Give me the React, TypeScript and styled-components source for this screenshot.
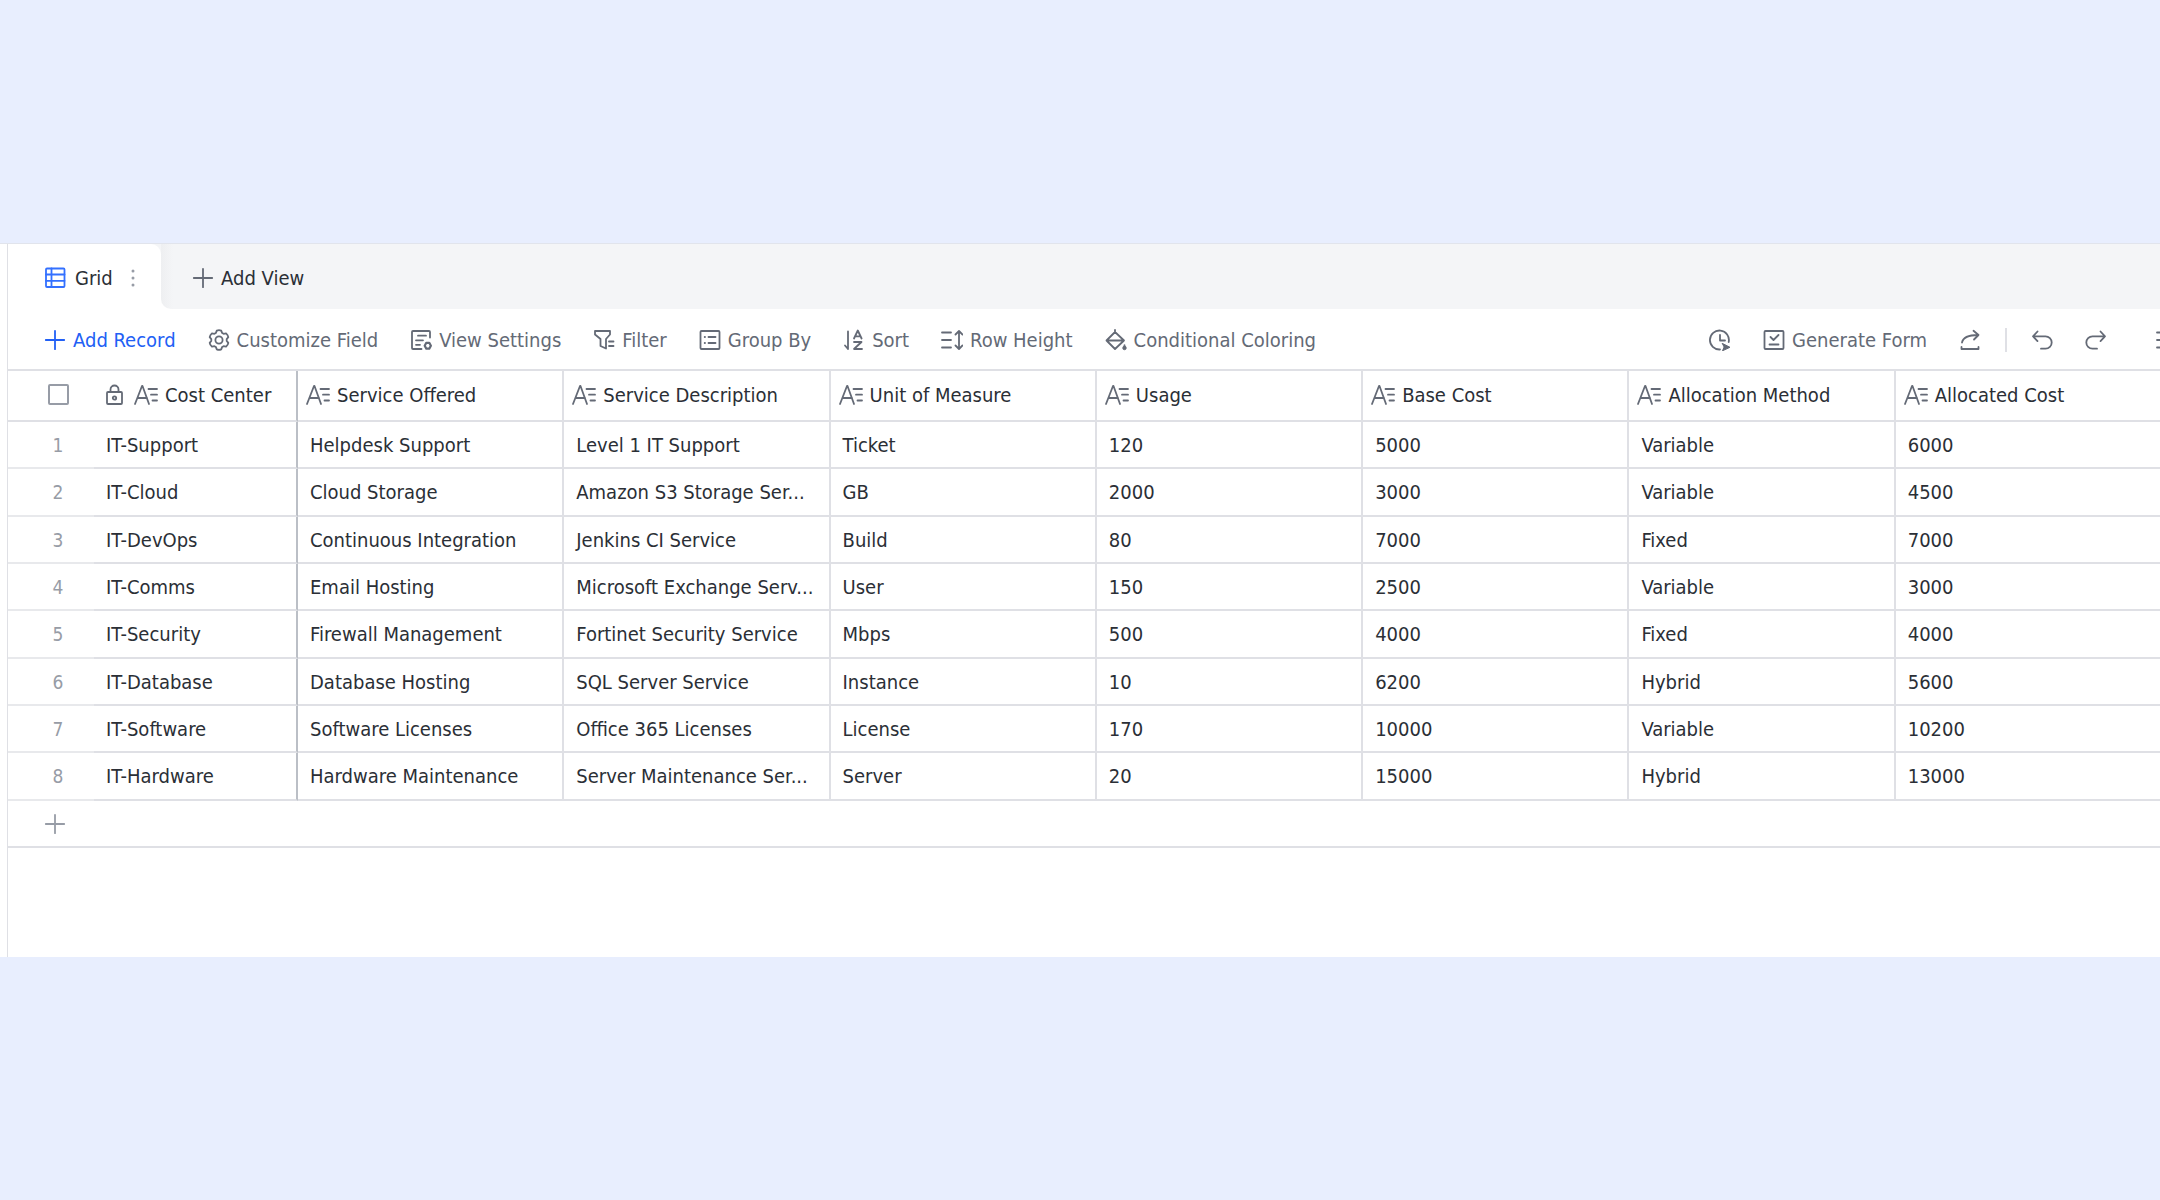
import React from "react";
import styled, { createGlobalStyle } from "styled-components";

const color = {
  backdrop: "#e8eefe",
  panel: "#ffffff",
  strip: "#f4f5f7",
  line: "#dfe0e5",
  frozen: "#bbbfc6",
  text: "#2b2f36",
  muted: "#646a76",
  faint: "#979ca6",
  accent: "#2260f5",
};

const GlobalStyle = createGlobalStyle`
  *, *::before, *::after { box-sizing: border-box; }
  body {
    margin: 0;
    overflow-x: hidden;
    background: ${color.backdrop};
    color: ${color.text};
    font: 20px/26px Tahoma, "DejaVu Sans Condensed", "Noto Sans", sans-serif;
  }
  button { font: inherit; color: inherit; background: none; border: 0; padding: 0; cursor: pointer; }
`;

const Page = styled.div`
  min-height: 100vh;
  display: flex;
  flex-direction: column;
  justify-content: center;
  overflow: hidden;
`;

const Panel = styled.main`
  background: ${color.panel};
  border-top: 1px solid #e1e4ec;
  padding-left: 7px;
`;

const Workspace = styled.section`
  border-left: 1px solid ${color.line};
  padding-bottom: 109px;
`;

const ViewBar = styled.nav`
  display: flex;
  height: 65px;
`;

const TabSlot = styled.div`
  flex: none;
  background: ${color.strip};
`;

const ActiveTab = styled.div`
  display: flex;
  align-items: center;
  height: 100%;
  width: 153px;
  padding: 2px 26px 0 36px;
  background: ${color.panel};
  border-top-right-radius: 10px;
`;

const TabButton = styled.button`
  display: flex;
  align-items: center;
  gap: 9px;
`;

const MoreButton = styled.button`
  display: flex;
  margin-left: auto;
`;

const ViewStrip = styled.div`
  flex: 1;
  display: flex;
  align-items: center;
  padding: 2px 0 0 31px;
  border-bottom-left-radius: 10px;
  background: linear-gradient(to right, #eeeff1, ${color.strip} 12px);
`;

const Toolbar = styled.div`
  display: flex;
  align-items: center;
  height: 60px;
  padding: 2px 0 0 36px;
`;

const ToolGroup = styled.div<{ $gap: number; $end?: boolean }>`
  display: flex;
  align-items: center;
  gap: ${(p) => p.$gap}px;
  flex: none;
  ${(p) => p.$end && "margin-left: auto; margin-right: -17px;"}
`;

const Tool = styled.button<{ $tone?: "accent" | "dark" }>`
  display: flex;
  align-items: center;
  gap: 7px;
  white-space: nowrap;
  color: ${(p) => (p.$tone === "accent" ? color.accent : p.$tone === "dark" ? color.text : color.muted)};
`;

const Divider = styled.span`
  width: 2px;
  height: 24px;
  background: ${color.line};
`;

const Glyph = styled.svg<{ $tone?: string }>`
  flex: none;
  display: block;
  fill: none;
  stroke: ${(p) => p.$tone ?? "currentColor"};
  stroke-width: 1.8;
  stroke-linecap: round;
  stroke-linejoin: round;
`;

const Table = styled.table`
  width: calc(100% + 2px);
  table-layout: fixed;
  border-collapse: separate;
  border-spacing: 0;
  border-top: 2px solid ${color.line};
`;

const IndexCol = styled.col`
  width: 86px;
`;

const NameCol = styled.col`
  width: 204px;
`;

const HeadCell = styled.th<{ $frozen?: boolean; $bare?: boolean }>`
  height: 51px;
  padding: 0 0 2px ${(p) => (p.$frozen ? 12 : 8)}px;
  font-weight: 400;
  text-align: left;
  white-space: nowrap;
  border-bottom: 2px solid ${color.line};
  border-right: ${(p) => (p.$bare ? "0" : `2px solid ${p.$frozen ? color.frozen : color.line}`)};
`;

const Field = styled.span`
  display: flex;
  align-items: center;
  gap: 7px;
`;

const LockSlot = styled.span`
  display: flex;
  margin-right: 4px;
`;

const Checkbox = styled.input`
  appearance: none;
  display: block;
  width: 21px;
  height: 21px;
  margin: 0 0 0 32px;
  border: 2px solid ${color.faint};
  border-radius: 2px;
`;

const Row = styled.tr`
  height: 47px;
  &:nth-child(3n + 2) { height: 48px; }
`;

const Cell = styled.td<{ $frozen?: boolean; $bare?: boolean }>`
  padding: 0 8px 0 12px;
  white-space: nowrap;
  overflow: hidden;
  text-overflow: ellipsis;
  border-bottom: 2px solid ${color.line};
  border-right: ${(p) => (p.$bare ? "0" : `2px solid ${p.$frozen ? color.frozen : color.line}`)};
`;

const IndexCell = styled.td`
  padding: 0 0 0 14px;
  text-align: center;
  font-size: 19px;
  color: ${color.faint};
  border-bottom: 2px solid #e8e9ec;
`;

const AddRow = styled.button`
  display: flex;
  align-items: center;
  width: 100%;
  height: 47px;
  padding-left: 36px;
  border-bottom: 2px solid ${color.line};
  color: ${color.faint};
`;

const Icon = ({ children, size = 22, tone }: { children: React.ReactNode; size?: number; tone?: string }) => (
  <Glyph width={size} height={size} viewBox="0 0 22 22" $tone={tone} aria-hidden="true">
    {children}
  </Glyph>
);

const PlusIcon = ({ tone }: { tone?: string }) => (
  <Icon tone={tone}><path d="M11 1.8v18.4M1.8 11h18.4" /></Icon>
);

const GridIcon = () => (
  <Icon tone="#3370ff">
    <rect x="2" y="1.500" width="18.500" height="18.500" rx="1" />
    <path d="M7.500 1.500V20M2 7.500h18.500M2 13.800h18.500" />
  </Icon>
);

const DotsIcon = () => (
  <Glyph width="4" height="18" viewBox="0 0 4 18" aria-hidden="true">
    <g fill={color.faint} stroke="none">
      <circle cx="2" cy="2" r="1.5" /><circle cx="2" cy="9" r="1.5" /><circle cx="2" cy="16" r="1.5" />
    </g>
  </Glyph>
);

const GearIcon = () => (
  <Icon>
    <path d="M8.800 1.600Q11 .6 13.200 1.600l.9 2.300 1.500.9 2.500-.4q1.800 1.400 2.200 3.800l-1.600 1.900v1.800l1.600 1.900q-.4 2.400-2.200 3.800l-2.500-.4-1.500.9-.9 2.300q-2.200 1-4.400 0l-.9-2.300-1.500-.9-2.500.4q-1.800-1.400-2.200-3.800l1.600-1.900v-1.800L1.700 8.200q.4-2.400 2.200-3.800l2.500.4 1.500-.9z" />
    <circle cx="11" cy="11" r="3.600" />
  </Icon>
);

const SettingsIcon = () => (
  <Icon>
    <path d="M20 8.500V3a1 1 0 0 0-1-1H3a1 1 0 0 0-1 1v16a1 1 0 0 0 1 1h8.500M8 6.700h8M6 11.300h7M6 15.800h4" />
    <path d="M16.300 13.800h3l1.600 2.900-1.600 2.900h-3l-1.600-2.900z" strokeWidth="2.200" />
  </Icon>
);

const FilterIcon = () => (
  <Icon>
    <path d="M2 2h15v3.500l-4 4.500v9.500l-5.500-2.500v-7L2 5.500zM16 12.500h4.500M16 17h4.500" />
  </Icon>
);

const GroupIcon = () => (
  <Icon>
    <rect x="1.500" y="2" width="19" height="18" rx="1" />
    <path d="M9.500 8h7M9.500 14h7M5.700 8h.3M5.700 14h.3" />
  </Icon>
);

const SortIcon = () => (
  <Icon>
    <path d="M5 2.500V20M2 16.500L5 20" />
    <path d="M11 9.500L14.800 1.500l3.800 8M12 7.300h5.500M11 13h7.500L11 20h8" />
  </Icon>
);

const HeightIcon = () => (
  <Icon>
    <path d="M1 3.500h9M1 11h9M1 18.500h9M18 2.500v17M14.500 5.500L18 2l3.500 3.500M14.500 16.500L18 20l3.500-3.500" />
  </Icon>
);

const BucketIcon = () => (
  <Icon>
    <path d="M10 1v2M10 3l9 8.500-9 8.500-8.500-8.500zM1.500 11.500H19" />
    <path d="M19.500 16c1.200 1.600 1.700 2.300 1.700 3a1.700 1.700 0 0 1-3.400 0c0-.7.5-1.400 1.700-3z" fill="currentColor" strokeWidth="1" />
  </Icon>
);

const ClockIcon = () => (
  <Icon>
    <path d="M11 20.500A9.500 9.500 0 1 1 19.700 13M11 6v5.500h5" />
    <path d="M13.500 14.500l7.500 3.800-7.500 3.500 1.500-3.500z" fill="currentColor" strokeWidth="1" />
  </Icon>
);

const FormIcon = () => (
  <Icon>
    <rect x="1.500" y="2" width="19" height="18" rx="1" />
    <path d="M7.500 8l3 3 5-5M6.500 15.500h9" />
  </Icon>
);

const ShareIcon = () => (
  <Icon>
    <path d="M2.500 18V20h17v-2M3 13.500C4 8.500 8 6 19 6M14.500 1.800L19.500 6l-4.500 4.500" />
  </Icon>
);

const UndoIcon = () => (
  <Icon><path d="M6.500 2.500L2 7.300l4.500 4.800M2 7.300h12.500a6.200 6.200 0 0 1 0 12.400H10" /></Icon>
);

const RedoIcon = () => (
  <Icon><path d="M15.500 2.500L20 7.300l-4.500 4.800M20 7.300H7.500a6.200 6.200 0 0 0 0 12.400H12" /></Icon>
);

const ListIcon = () => (
  <Icon><path d="M2 3.500h18M2 11h18M2 18.500h18" /></Icon>
);

const LockIcon = () => (
  <Glyph width="17" height="22" viewBox="0 0 17 22" $tone={color.muted} aria-hidden="true">
    <rect x="1" y="8" width="15" height="12" rx="1" />
    <path d="M4.500 8V5.500a4 4 0 0 1 8 0V8" />
    <circle cx="8.500" cy="14" r="1.700" />
  </Glyph>
);

const TextFieldIcon = () => (
  <Glyph width="24" height="22" viewBox="0 0 24 22" $tone={color.muted} aria-hidden="true">
    <path d="M1 20L8 2h.5l6.500 18M3.500 14h9.500M14.500 5h8.500M17 10.700h6M18.500 16.500H23" />
  </Glyph>
);

const tools: { label: string; icon: React.ReactNode; tone?: "accent" }[] = [
  { label: "Add Record", icon: <PlusIcon />, tone: "accent" },
  { label: "Customize Field", icon: <GearIcon /> },
  { label: "View Settings", icon: <SettingsIcon /> },
  { label: "Filter", icon: <FilterIcon /> },
  { label: "Group By", icon: <GroupIcon /> },
  { label: "Sort", icon: <SortIcon /> },
  { label: "Row Height", icon: <HeightIcon /> },
  { label: "Conditional Coloring", icon: <BucketIcon /> },
];

const fields = [
  "Cost Center", "Service Offered", "Service Description", "Unit of Measure",
  "Usage", "Base Cost", "Allocation Method", "Allocated Cost",
];

const records = [
  ["IT-Support", "Helpdesk Support", "Level 1 IT Support", "Ticket", "120", "5000", "Variable", "6000"],
  ["IT-Cloud", "Cloud Storage", "Amazon S3 Storage Ser...", "GB", "2000", "3000", "Variable", "4500"],
  ["IT-DevOps", "Continuous Integration", "Jenkins CI Service", "Build", "80", "7000", "Fixed", "7000"],
  ["IT-Comms", "Email Hosting", "Microsoft Exchange Serv...", "User", "150", "2500", "Variable", "3000"],
  ["IT-Security", "Firewall Management", "Fortinet Security Service", "Mbps", "500", "4000", "Fixed", "4000"],
  ["IT-Database", "Database Hosting", "SQL Server Service", "Instance", "10", "6200", "Hybrid", "5600"],
  ["IT-Software", "Software Licenses", "Office 365 Licenses", "License", "170", "10000", "Variable", "10200"],
  ["IT-Hardware", "Hardware Maintenance", "Server Maintenance Ser...", "Server", "20", "15000", "Hybrid", "13000"],
];

const last = fields.length - 1;

export default function App() {
  return (
    <Page>
      <GlobalStyle />
      <Panel>
        <Workspace>
          <ViewBar>
            <TabSlot>
              <ActiveTab>
                <TabButton type="button"><GridIcon />Grid</TabButton>
                <MoreButton type="button" aria-label="View options"><DotsIcon /></MoreButton>
              </ActiveTab>
            </TabSlot>
            <ViewStrip>
              <Tool type="button" $tone="dark"><PlusIcon tone={color.muted} />Add View</Tool>
            </ViewStrip>
          </ViewBar>
          <Toolbar>
            <ToolGroup $gap={32}>
              {tools.map((t) => (
                <Tool key={t.label} type="button" $tone={t.tone}>{t.icon}{t.label}</Tool>
              ))}
            </ToolGroup>
            <ToolGroup $gap={48} $end>
              <ToolGroup $gap={32}>
                <Tool type="button" aria-label="Automations"><ClockIcon /></Tool>
                <Tool type="button"><FormIcon />Generate Form</Tool>
                <ToolGroup $gap={24}>
                  <Tool type="button" aria-label="Share"><ShareIcon /></Tool>
                  <Divider />
                  <Tool type="button" aria-label="Undo"><UndoIcon /></Tool>
                </ToolGroup>
                <Tool type="button" aria-label="Redo"><RedoIcon /></Tool>
              </ToolGroup>
              <Tool type="button" aria-label="More"><ListIcon /></Tool>
            </ToolGroup>
          </Toolbar>
          <Table>
            <colgroup>
              <IndexCol />
              <NameCol />
              {fields.slice(1).map((f) => <col key={f} />)}
            </colgroup>
            <thead>
              <tr>
                <HeadCell $bare scope="col">
                  <Checkbox type="checkbox" aria-label="Select all records" />
                </HeadCell>
                {fields.map((f, i) => (
                  <HeadCell key={f} scope="col" $frozen={i === 0} $bare={i === last}>
                    <Field>
                      {i === 0 && <LockSlot><LockIcon /></LockSlot>}
                      <TextFieldIcon />{f}
                    </Field>
                  </HeadCell>
                ))}
              </tr>
            </thead>
            <tbody>
              {records.map((r, n) => (
                <Row key={r[0]}>
                  <IndexCell>{n + 1}</IndexCell>
                  {r.map((v, i) => (
                    <Cell key={fields[i]} $frozen={i === 0} $bare={i === last}>{v}</Cell>
                  ))}
                </Row>
              ))}
            </tbody>
          </Table>
          <AddRow type="button" aria-label="Add row"><PlusIcon /></AddRow>
        </Workspace>
      </Panel>
    </Page>
  );
}
